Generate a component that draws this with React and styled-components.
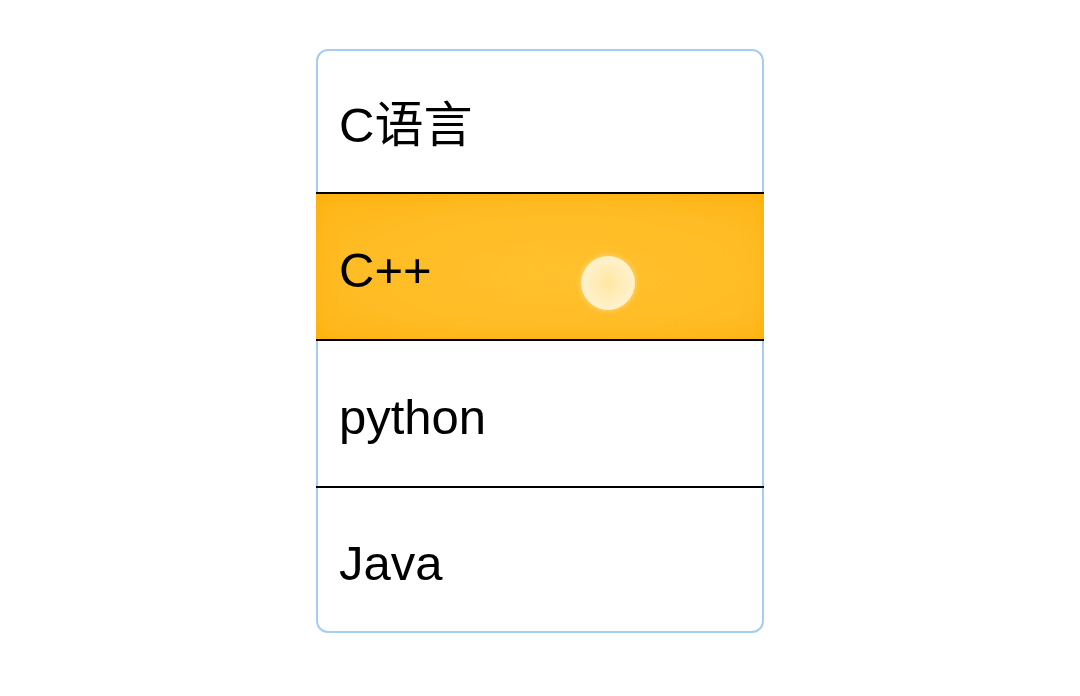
import React from 'react';
import styled, { createGlobalStyle } from 'styled-components';

const GlobalStyle = createGlobalStyle`
  html, body {
    margin: 0;
    padding: 0;
    background: #ffffff;
    font-family: "Liberation Sans", "Noto Sans CJK SC", sans-serif;
  }
`;

const Page = styled.div`
  width: 1080px;
  height: 696px;
  display: flex;
  justify-content: center;
  padding-top: 49px;
  box-sizing: border-box;
`;

const List = styled.ul`
  list-style: none;
  margin: 0;
  padding: 0;
  width: 448px;
  height: 584px;
  box-sizing: border-box;
  border: 2px solid #a3cdf3;
  border-radius: 12px;
  display: flex;
  flex-direction: column;
  background: #ffffff;
`;

const Item = styled.li`
  position: relative;
  box-sizing: border-box;
  height: ${(p) => p.$height}px;
  flex: none;
  display: flex;
  align-items: center;
  margin: 0 -2px;
  padding: 7px 0 0 23px;
  font-size: 49px;
  line-height: 1;
  color: #000;
  border-top: ${(p) => (p.$first ? 'none' : '2px solid #000')};
  background: ${(p) => (p.$active ? 'radial-gradient(ellipse at 55% 55%, #ffc12e 0%, #ffbc24 60%, #ffb514 100%)' : 'transparent')};
  box-shadow: ${(p) => (p.$active ? 'inset 0 0 18px rgba(255, 170, 0, 0.55)' : 'none')};
`;

const Touch = styled.span`
  position: absolute;
  left: 265px;
  top: 62px;
  width: 54px;
  height: 54px;
  border-radius: 50%;
  background: radial-gradient(circle, #ffe6a2 0%, #fff0c8 60%, #fff5dc 100%);
  box-shadow: 0 0 4px 2px rgba(255, 220, 140, 0.5);
`;

const langs = [
  { name: 'C语言', height: 141 },
  { name: 'C++', height: 147 },
  { name: 'python', height: 147 },
  { name: 'Java', height: 145 },
];

export default function App() {
  return (
    <>
      <GlobalStyle />
      <Page>
        <List>
          {langs.map((lang, i) => (
            <Item key={lang.name} $height={lang.height} $first={i === 0} $active={i === 1}>
              {lang.name}
              {i === 1 && <Touch />}
            </Item>
          ))}
        </List>
      </Page>
    </>
  );
}
